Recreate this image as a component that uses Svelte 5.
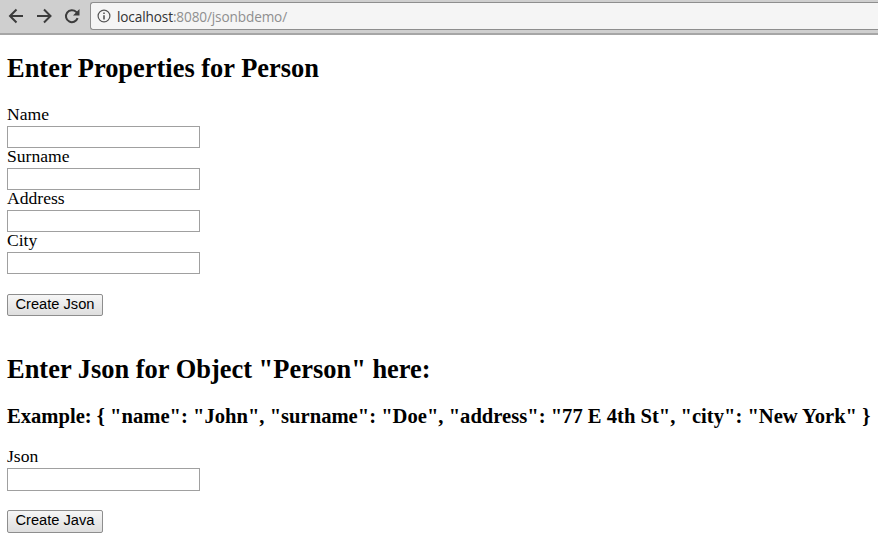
<script>
  const fields = ['Name', 'Surname', 'Address', 'City'];
</script>

<header class="toolbar">
  <button class="nav" aria-label="Back">
    <svg width="16" height="16" viewBox="0 0 16 16"><path d="M15 8H2.5M8.5 1.5 2 8l6.5 6.5" /></svg>
  </button>
  <button class="nav" aria-label="Forward">
    <svg width="16" height="16" viewBox="0 0 16 16"><path d="M1 8h13M8 1.5 14.5 8 8 14.5" /></svg>
  </button>
  <button class="nav" aria-label="Reload">
    <svg width="16" height="16" viewBox="0 0 16 16"><path d="M13.6 10.2A6 6 0 1 1 12.2 3.9L14 6" /><path class="fill" d="M15.5 1V7.5H9z" /></svg>
  </button>
  <div class="address">
    <svg class="info" width="14" height="14" viewBox="0 0 14 14">
      <circle cx="7" cy="7" r="5.9" />
      <path class="dot" d="M7 6.2v4.2M7 3.4v1.7" />
    </svg>
    <span class="host">localhost</span><span class="rest">:8080/jsonbdemo/</span>
  </div>
</header>

<main class="page">
  <h2 class="first">Enter Properties for Person</h2>
  <form>
    {#each fields as field}
      <label for={field}>{field}</label>
      <input id={field} type="text" />
    {/each}
    <button type="button" class="submit">Create Json</button>
  </form>

  <h2 class="second">Enter Json for Object "Person" here:</h2>
  <h3>Example: &#123; "name": "John", "surname": "Doe", "address": "77 E 4th St", "city": "New York" &#125;</h3>
  <form class="json">
    <label for="json">Json</label>
    <input id="json" type="text" />
    <button type="button" class="submit">Create Java</button>
  </form>
</main>

<style>
  :global(body) {
    margin: 0;
    background: #fff;
    overflow: hidden;
  }
  .toolbar {
    display: flex;
    align-items: center;
    height: 33px;
    padding-left: 7px;
    background: #cfcfcf;
    border-bottom: 2px solid #a6a6a6;
  }
  .nav {
    width: 18px;
    height: 18px;
    margin: -1px 10px 0 0;
    padding: 0;
    border: 0;
    background: none;
    display: flex;
    align-items: center;
    justify-content: center;
  }
  .nav svg path {
    fill: none;
    stroke: #3c3c3c;
    stroke-width: 2;
  }
  .nav svg path.fill {
    fill: #3c3c3c;
    stroke: none;
  }
  .address {
    flex: 1;
    height: 28px;
    box-sizing: border-box;
    margin: -1px 0 0 -1px;
    display: flex;
    align-items: center;
    padding-left: 6px;
    background: #f5f5f5;
    border: 1px solid #8e8e8e;
    border-right: 0;
    border-radius: 3px 0 0 3px;
    font: 13.6px "Open Sans", sans-serif;
    letter-spacing: -0.12px;
  }
  .info {
    margin-right: 6px;
  }
  .info circle,
  .info path {
    fill: none;
    stroke: #555;
    stroke-width: 1.2;
  }
  .info path.dot {
    stroke-width: 1.6;
  }
  .host {
    color: #333;
  }
  .rest {
    color: #8f8f8f;
  }
  .page {
    padding: 0 7px;
    font: 17.6px/20px "Liberation Serif", serif;
    color: #000;
  }
  h2 {
    font-size: 26.45px;
    line-height: 30px;
    font-weight: bold;
    margin: 0;
  }
  h2.first {
    padding-top: 18px;
    margin-bottom: 21px;
  }
  h2.second {
    margin-top: 38px;
    margin-bottom: 20px;
  }
  h3 {
    font-size: 20.6px;
    line-height: 24px;
    font-weight: bold;
    margin: 0 0 18px;
    white-space: nowrap;
  }
  form {
    display: flex;
    flex-direction: column;
    align-items: flex-start;
  }
  label {
    display: block;
  }
  input {
    width: 193px;
    height: 22px;
    box-sizing: border-box;
    margin: 2px 0 -2px;
    padding: 1px 2px;
    border: 1px solid #a0a0a0;
    background: #fff;
  }
  .json input {
    height: 23px;
  }
  .json .submit {
    height: 23px;
    margin-top: 21px;
    padding-bottom: 3px;
  }
  .submit {
    margin-top: 22px;
    width: 96px;
    height: 22px;
    padding: 0 0 2px;
    border: 1px solid #8e8e8e;
    border-radius: 2px;
    background: linear-gradient(#f6f6f6, #dedede);
    font: 14.67px "Liberation Sans", sans-serif;
    color: #000;
  }
</style>
